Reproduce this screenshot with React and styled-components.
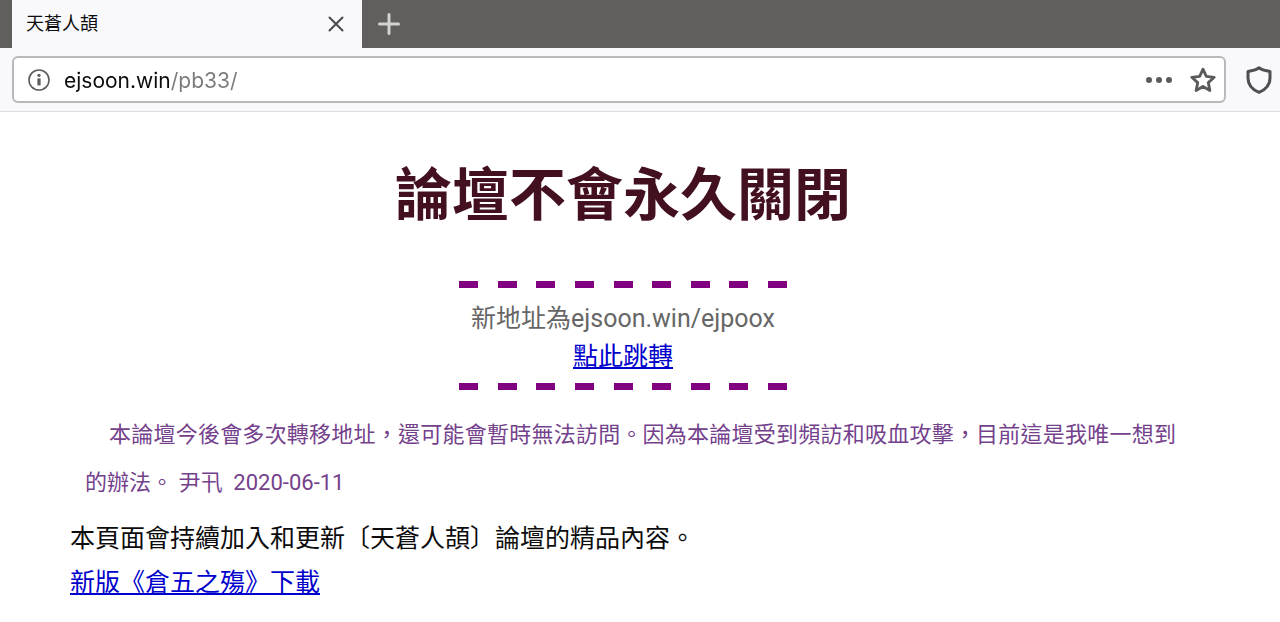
import React from "react";
import styled, { createGlobalStyle } from "styled-components";

function ForumNotice() {
  return (
    <Page>
      <Title>論壇不會永久關閉</Title>
      <AddressBox>
        <DashLine />
        <Address>新地址為ejsoon.win/ejpoox</Address>
        <Link href="#ejpoox">點此跳轉</Link>
        <DashLine />
      </AddressBox>
      <Notice>
        本論壇今後會多次轉移地址，還可能會暫時無法訪問。因為本論壇受到頻訪和吸血攻擊，目前這是我唯一想到的辦法。
        尹卂&nbsp; 2020-06-11
      </Notice>
      <Text>本頁面會持續加入和更新〔天蒼人頡〕論壇的精品內容。</Text>
      <Text>
        <Link href="#download">新版《倉五之殤》下載</Link>
      </Text>
    </Page>
  );
}

function DashLine() {
  return (
    <Dashes aria-hidden="true">
      {Array.from({ length: 9 }, (_, i) => (
        <Dash key={i} />
      ))}
    </Dashes>
  );
}

function Browser() {
  return (
    <>
      <TabBar>
        <Tab>
          <TabTitle>天蒼人頡</TabTitle>
          <IconButton aria-label="關閉分頁">
            <svg width="16" height="16" viewBox="0 0 16 16">
              <path
                d="M1.5 1.5l13 13M14.5 1.5l-13 13"
                stroke="#4a4a4c"
                strokeWidth="2"
                strokeLinecap="round"
              />
            </svg>
          </IconButton>
        </Tab>
        <IconButton aria-label="新分頁">
          <svg width="22" height="22" viewBox="0 0 22 22">
            <path
              d="M11 1.500v19M1.500 11h19"
              stroke="#d2d2d0"
              strokeWidth="3"
              strokeLinecap="round"
            />
          </svg>
        </IconButton>
      </TabBar>
      <ToolBar>
        <UrlBar>
          <IconButton aria-label="網站資訊">
            <svg width="22" height="22" viewBox="0 0 22 22">
              <circle
                cx="11"
                cy="11"
                r="10"
                fill="none"
                stroke="#5c5c5e"
                strokeWidth="1.6"
              />
              <circle cx="11" cy="6.3" r="1.6" fill="#5c5c5e" />
              <path d="M9.4 9.4h3.2v7H9.4z" fill="#5c5c5e" />
            </svg>
          </IconButton>
          <UrlInput type="text" aria-label="網址" defaultValue="ejsoon.win/pb33/" />
          <UrlActions>
            <IconButton aria-label="更多">
              <svg width="26" height="6" viewBox="0 0 26 6">
                <circle cx="3" cy="3" r="3" fill="#5a5a5c" />
                <circle cx="13" cy="3" r="3" fill="#5a5a5c" />
                <circle cx="23" cy="3" r="3" fill="#5a5a5c" />
              </svg>
            </IconButton>
            <IconButton aria-label="加入書籤">
              <svg width="26" height="26" viewBox="0 0 26 26">
                <path
                  d="M13 2.200l3.300 7.200 7.900.9-5.900 5.300 1.600 7.900L13 19.500 6.100 23.500l1.600-7.900-5.900-5.300 7.900-.9z"
                  fill="none"
                  stroke="#5a5a5c"
                  strokeWidth="2.8"
                  strokeLinejoin="round"
                />
              </svg>
            </IconButton>
          </UrlActions>
        </UrlBar>
        <IconButton aria-label="保護">
          <svg width="26" height="28" viewBox="0 0 26 28">
            <path
              d="M13 1.8C10 4 6 5 2 5.4V12c0 7.500 4.500 11.700 11 14.300C19.500 23.700 24 19.500 24 12V5.400C20 5 16 4 13 1.800z"
              fill="none"
              stroke="#4f4f51"
              strokeWidth="3"
              strokeLinejoin="round"
            />
          </svg>
        </IconButton>
      </ToolBar>
    </>
  );
}

function App() {
  return (
    <>
      <GlobalStyle />
      <Browser />
      <ForumNotice />
    </>
  );
}

const GlobalStyle = createGlobalStyle`
  * {
    box-sizing: border-box;
  }
  body {
    margin: 0;
    background: #ffffff;
    font-family: Roboto, "Noto Sans CJK TC", sans-serif;
    color: #0c0c0d;
  }
`;

const TabBar = styled.div`
  display: flex;
  align-items: stretch;
  gap: 16px;
  height: 48px;
  padding-left: 12px;
  background: #605f5d;
`;

const Tab = styled.div`
  display: flex;
  align-items: center;
  justify-content: space-between;
  width: 350px;
  padding: 0 18px 0 14px;
  background: #f9f9fc;
`;

const TabTitle = styled.span`
  font-size: 18px;
  line-height: 24px;
`;

const IconButton = styled.button`
  display: flex;
  flex: none;
  align-items: center;
  padding: 0;
  border: none;
  background: none;
`;

const ToolBar = styled.div`
  display: flex;
  align-items: center;
  gap: 20px;
  height: 64px;
  padding: 0 8px 0 12px;
  background: #f9f9fc;
  border-bottom: 1px solid #dddde0;
`;

const UrlBar = styled.div`
  display: flex;
  flex: 1;
  align-items: center;
  height: 47px;
  padding: 0 8px 0 14px;
  background: #ffffff;
  border: 2px solid #b9b9bb;
  border-radius: 6px;
`;

const UrlInput = styled.input`
  flex: 1;
  min-width: 0;
  height: 36px;
  padding: 2px 0 0 14px;
  border: none;
  outline: none;
  font-family: Inter, sans-serif;
  font-size: 21px;
  /* host dark, path grey */
  color: transparent;
  caret-color: #0c0c0d;
  background: linear-gradient(to right, #0c0c0d 120px, #7a7a7c 120px);
  background-clip: text;
`;

const UrlActions = styled.div`
  display: flex;
  align-items: center;
  gap: 18px;
`;

const Page = styled.main`
  display: flex;
  flex-direction: column;
  padding: 42px 104px 20px 70px;
`;

const Title = styled.h1`
  margin: 0 0 43px;
  font-size: 57px;
  line-height: 84px;
  font-weight: bold;
  text-align: center;
  color: #431020;
`;

const AddressBox = styled.section`
  display: flex;
  flex-direction: column;
  align-items: center;
  font-size: 25px;
  line-height: 38px;
  margin-bottom: 21px;
`;

const Dashes = styled.div`
  display: flex;
  justify-content: space-between;
  width: 328px;
  height: 7px;
  margin: 0 0 12px;

  &:last-child {
    margin: 7px 0 0;
  }
`;

const Dash = styled.span`
  width: 19px;
  background: #800080;
`;

const Address = styled.span`
  color: #666666;
`;

const Link = styled.a`
  color: #0000cc;
  text-decoration: underline;
`;

const Notice = styled.p`
  margin: 0 0 10px;
  padding-left: 15px;
  font-size: 22px;
  line-height: 48px;
  text-align: justify;
  text-indent: 24px;
  color: #74418c;
`;

const Text = styled.p`
  margin: 0;
  font-size: 25px;
  line-height: 44px;
`;

export default App;
